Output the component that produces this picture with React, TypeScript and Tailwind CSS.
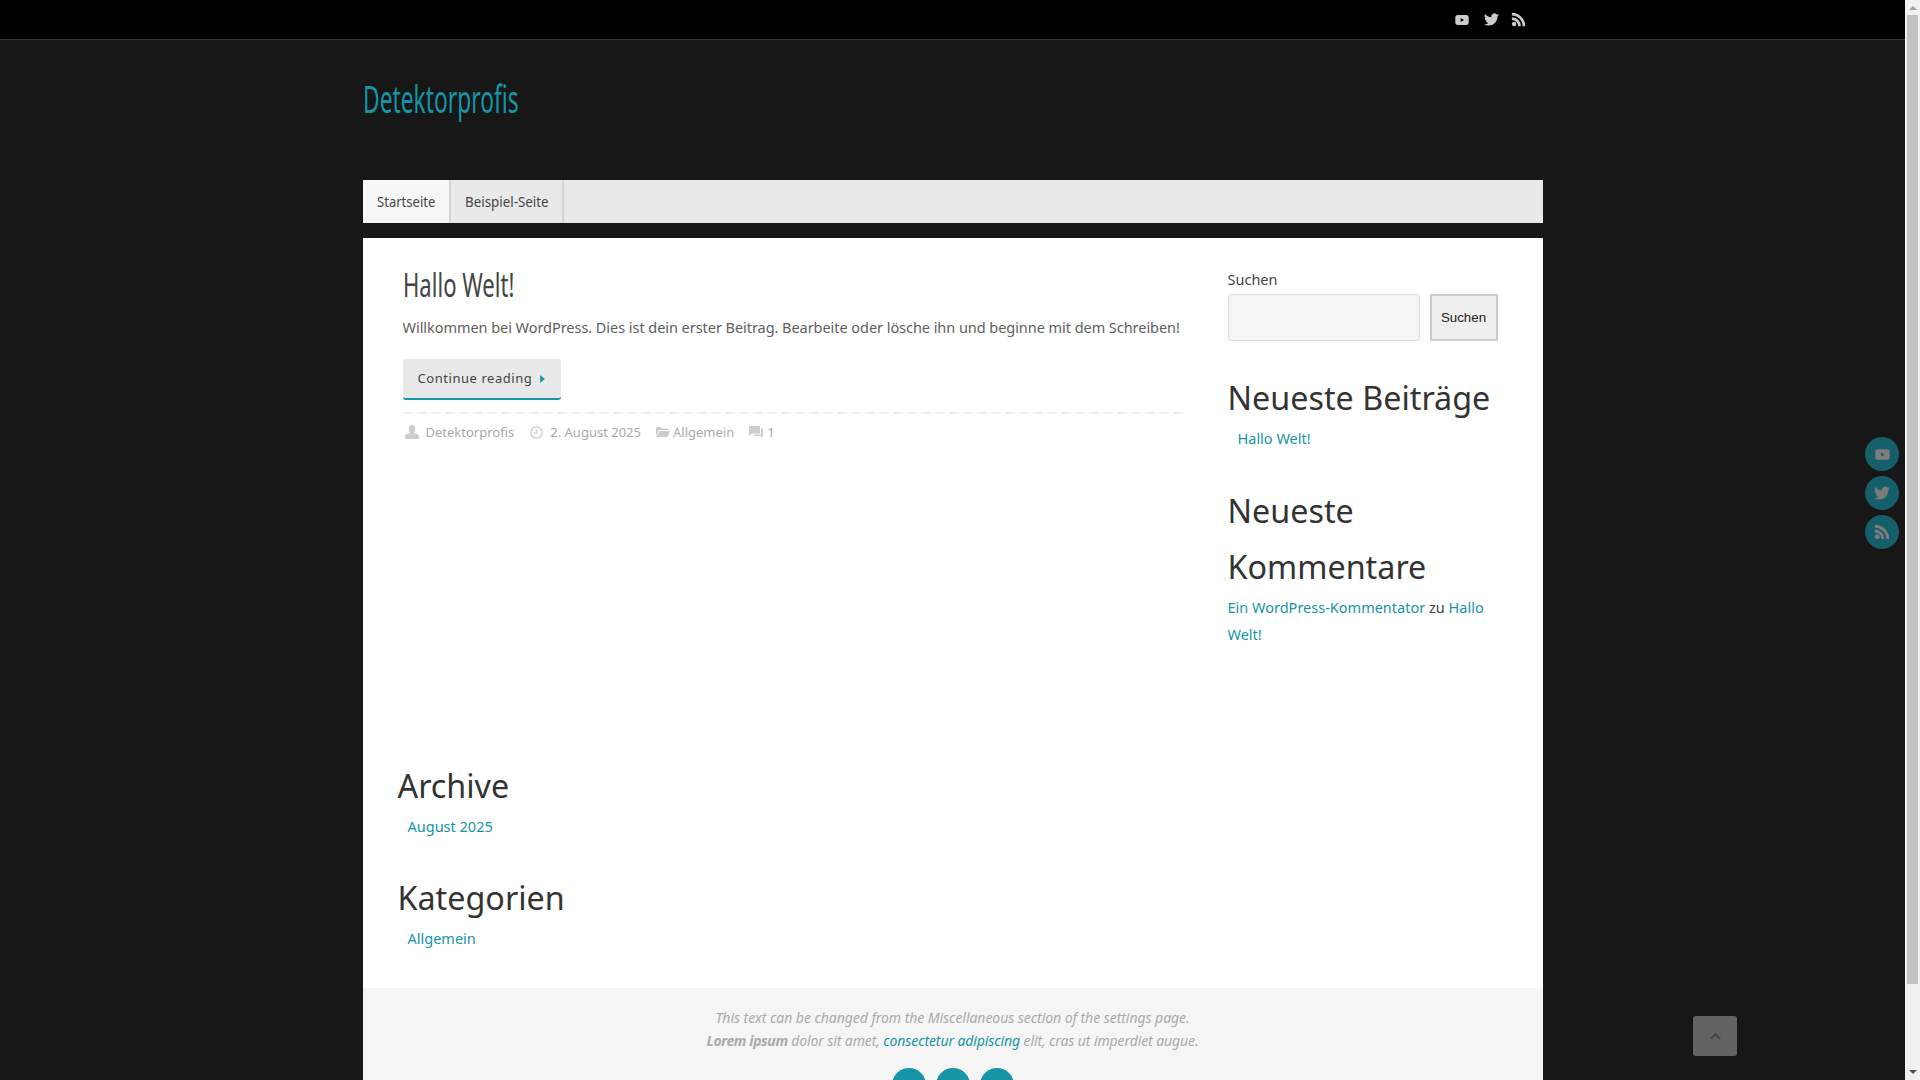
const teal = "text-[#1695a6]"

function YoutubeIcon({ className }: { className?: string }) {
  return (
    <svg viewBox="0 0 24 24" className={className} fill="currentColor">
      <path d="M5 3.500h14a4.500 4.500 0 0 1 4.500 4.500v8a4.500 4.500 0 0 1-4.500 4.500H5A4.500 4.500 0 0 1 .5 16V8A4.500 4.500 0 0 1 5 3.500zm4.800 5.200v6.600l5.600-3.300z" fillRule="evenodd" />
    </svg>
  )
}

function TwitterIcon({ className }: { className?: string }) {
  return (
    <svg viewBox="0 0 24 24" className={className} fill="currentColor">
      <path d="M23.950 4.570a10 10 0 0 1-2.820.770 4.960 4.960 0 0 0 2.160-2.720 9.900 9.900 0 0 1-3.120 1.190 4.920 4.920 0 0 0-8.380 4.480C7.690 8.100 4.070 6.130 1.640 3.160a4.820 4.820 0 0 0-.670 2.480c0 1.710.870 3.210 2.190 4.100a4.900 4.900 0 0 1-2.230-.620v.060a4.920 4.920 0 0 0 3.950 4.830 5 5 0 0 1-2.210.080 4.940 4.940 0 0 0 4.600 3.420A9.870 9.870 0 0 1 0 19.540a14 14 0 0 0 7.560 2.210c9.050 0 14-7.500 14-13.980 0-.210 0-.420-.020-.630a9.940 9.940 0 0 0 2.460-2.550z" />
    </svg>
  )
}

function RssIcon({ className }: { className?: string }) {
  return (
    <svg viewBox="0 0 24 24" className={className} fill="currentColor">
      <circle cx="5" cy="19" r="3.600" />
      <path d="M1.400 8.300v4.300a10 10 0 0 1 10 10h4.300A14.300 14.300 0 0 0 1.400 8.300z" />
      <path d="M1.400 1.200v4.300a17.100 17.100 0 0 1 17.100 17.100h4.300A21.400 21.400 0 0 0 1.400 1.200z" />
    </svg>
  )
}

function SideCircle({ children }: { children: React.ReactNode }) {
  return <div className="flex h-[34px] w-[34px] items-center justify-center rounded-full bg-[#155f6a] text-[#7c7c7c]">{children}</div>
}

function Heading({ children, className = "" }: { children: React.ReactNode; className?: string }) {
  return <h2 className={`text-[32.300px] leading-[56px] font-normal text-[#333] ${className}`}>{children}</h2>
}

function Condensed({ children, className }: { children: React.ReactNode; className: string }) {
  return <span className={`inline-block origin-left whitespace-nowrap ${className}`}>{children}</span>
}

export default function App() {
  return (
    <div className="relative h-screen overflow-hidden bg-[#171717] pr-[15px] font-['Noto_Sans',sans-serif] text-[14.500px] text-[#606060]">
      {/* Top bar */}
      <div className="h-[40px] border-b border-[#333] bg-black">
        <div className="mx-auto flex h-[39px] w-[1180px] items-center justify-end pr-[17px] text-[#ccc]">
          <YoutubeIcon className="h-[14px] w-[14px]" />
          <TwitterIcon className="ml-[15px] h-[15px] w-[15px]" />
          <RssIcon className="ml-[12px] h-[15px] w-[15px]" />
        </div>
      </div>

      <div className="mx-auto w-[1180px]">
        {/* Site title */}
        <div className={`flex h-[140px] items-start pt-[33px] text-[38px] leading-[50px] ${teal}`}>
          <Condensed className="scale-x-[0.6]">Detektorprofis</Condensed>
        </div>

        {/* Nav */}
        <div className="flex h-[43px] items-stretch bg-[#e9e9e9] text-[15px] text-[#444]">
          <div className="flex w-[88px] items-center border-r-2 border-[#d4d4d4] bg-[#f6f6f6] pl-[14px]">
            <Condensed className="scale-x-[0.87]">Startseite</Condensed>
          </div>
          <div className="flex w-[113px] items-center border-r-2 border-[#d4d4d4] pl-[14px]">
            <Condensed className="scale-x-[0.89]">Beispiel-Seite</Condensed>
          </div>
        </div>

        {/* Content */}
        <div className="mt-[15px] flex h-[750px] bg-white">
          <div className="flex w-[882px] flex-col">
            <div className="pt-[25px] pl-[40px]">
              <h1 className="text-[32px] leading-[44px] font-normal text-[#444]">
                <Condensed className="scale-x-[0.69]">Hallo Welt!</Condensed>
              </h1>
              <p className="mt-[7px] leading-[27px] tracking-[-0.05px] whitespace-nowrap">
                Willkommen bei WordPress. Dies ist dein erster Beitrag. Bearbeite oder lösche ihn und beginne mit dem Schreiben!
              </p>
              <div className="mt-[18px] flex h-[41px] w-[158px] items-center gap-[8px] rounded-[3px] border-b-2 border-[#1695a6] bg-[#e8e8e8] pl-[15px] text-[13px] tracking-[0.55px] text-[#444]">
                Continue reading
                <svg viewBox="0 0 6 10" className="h-[8px] w-[5px] fill-[#1695a6]">
                  <path d="M0 0l6 5-6 5z" />
                </svg>
              </div>
              <div className="mt-[12px] h-[2px] w-[780px] bg-[repeating-linear-gradient(90deg,#eee_0,#eee_10px,transparent_10px,transparent_14px)]" />
              <div className="mt-[8px] flex items-center text-[13px] leading-[20px] text-[#aaa]">
                <svg viewBox="0 0 14 14" className="ml-[2px] h-[14px] w-[14px] fill-[#ccc]">
                  <path d="M7 0c2 0 3.200 1.600 3.200 3.600S9.200 7.300 8.800 8c2.600.6 5.200 1.500 5.200 3.500V14H0v-2.500C0 9.500 2.600 8.600 5.200 8c-.4-.7-1.400-2.400-1.400-4.400S5 0 7 0z" />
                </svg>
                <span className="ml-[7px]">Detektorprofis</span>
                <svg viewBox="0 0 14 14" className="ml-[16px] h-[13px] w-[13px] fill-none stroke-[#ccc] stroke-[1.4]">
                  <circle cx="7" cy="7" r="6" />
                  <path d="M7 3.500V7.500H4" />
                </svg>
                <span className="ml-[7px]">2. August 2025</span>
                <svg viewBox="0 0 14 12" className="ml-[15px] h-[12px] w-[14px] fill-[#ccc]">
                  <path d="M0 2a1 1 0 0 1 1-1h3.500l1 1.500H12a1 1 0 0 1 1 1V4H3L0 10zM3.500 5H14l-2.500 6H0z" />
                </svg>
                <span className="ml-[3px]">Allgemein</span>
                <svg viewBox="0 0 14 12" className="ml-[15px] h-[12px] w-[14px] fill-[#ccc]">
                  <path d="M0 0h11v7.500H3L0 10z" />
                  <path d="M12 2.500h2V10l-2 2v-2H5V8.500h7z" />
                </svg>
                <span className="ml-[4px]">1</span>
              </div>
            </div>

            <div className="mt-[315px] pl-[35px]">
              <Heading>Archive</Heading>
              <a className={`block pl-[10px] leading-[27px] ${teal}`}>August 2025</a>
              <Heading className="mt-[29px]">Kategorien</Heading>
              <a className={`block pl-[10px] leading-[27px] ${teal}`}>Allgemein</a>
            </div>
          </div>

          {/* Sidebar */}
          <div className="w-[298px] pt-[28px]">
            <div className="ml-[-17px] w-[280px]">
              <div className="leading-[27px] text-[#444]">Suchen</div>
              <div className="mt-[1px] flex gap-[10px]">
                <div className="h-[47px] w-[192px] rounded-[3px] border border-[#ddd] bg-[#f5f5f5]" />
                <div className="flex h-[47px] w-[68px] items-center justify-center border-2 border-[#ccc] bg-[#efefef] font-['Liberation_Sans',sans-serif] text-[13.330px] text-[#222]">
                  Suchen
                </div>
              </div>
              <Heading className="mt-[28px]">Neueste Beiträge</Heading>
              <a className={`block pl-[10px] leading-[27px] ${teal}`}>Hallo Welt!</a>
              <Heading className="mt-[30px] w-[250px]">Neueste Kommentare</Heading>
              <p className="w-[270px] leading-[27px] text-[#444]">
                <a className={teal}>Ein WordPress-Kommentator</a> zu <a className={teal}>Hallo Welt!</a>
              </p>
            </div>
          </div>
        </div>

        {/* Footer */}
        <div className="h-[100px] bg-[#f5f5f5] pt-[18px] text-center text-[14px] leading-[23px] text-[#aaa] italic">
          <p className="tracking-[-0.05px]">This text can be changed from the Miscellaneous section of the settings page.</p>
          <p className="tracking-[-0.1px]">
            <strong className="tracking-[-0.4px]">Lorem ipsum</strong> dolor sit amet, <a className={teal}>consectetur adipiscing</a> elit, cras ut imperdiet augue.
          </p>
          <div className="mt-[16px] flex justify-center gap-[10px]">
            <div className="h-[34px] w-[34px] rounded-full bg-[#1695a6]" />
            <div className="h-[34px] w-[34px] rounded-full bg-[#1695a6]" />
            <div className="h-[34px] w-[34px] rounded-full bg-[#1695a6]" />
          </div>
        </div>
      </div>

      {/* Fixed side icons */}
      <div className="absolute top-[437px] right-[21px] flex flex-col gap-[5px]">
        <SideCircle><YoutubeIcon className="h-[15px] w-[15px]" /></SideCircle>
        <SideCircle><TwitterIcon className="h-[16px] w-[16px]" /></SideCircle>
        <SideCircle><RssIcon className="h-[16px] w-[16px]" /></SideCircle>
      </div>

      {/* Back to top */}
      <div className="absolute top-[1016px] left-[1693px] flex h-[40px] w-[44px] items-center justify-center rounded-[3px] bg-[#626262]">
        <svg viewBox="0 0 12 8" className="h-[8px] w-[11px] fill-none stroke-[#444] stroke-[2.4]">
          <path d="M1 7l5-5 5 5" />
        </svg>
      </div>

      {/* Scrollbar */}
      <div className="absolute top-0 right-0 flex h-full w-[15px] flex-col items-center bg-[#f1f1f1]">
        <svg viewBox="0 0 8 4" className="mt-[6px] h-[4px] w-[8px] fill-[#a3a3a3]"><path d="M4 0l4 4H0z" /></svg>
        <div className="mt-[5px] h-[969px] w-[11px] bg-[#c1c1c1]" />
        <svg viewBox="0 0 8 4" className="mt-auto mb-[6px] h-[4px] w-[8px] fill-[#505050]"><path d="M0 0h8L4 4z" /></svg>
      </div>
    </div>
  )
}
